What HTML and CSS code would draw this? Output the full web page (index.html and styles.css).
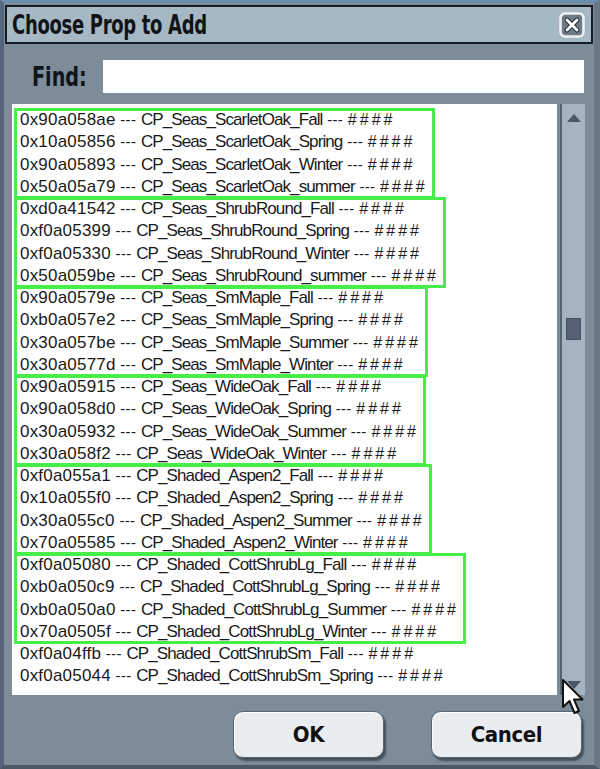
FILE: index.html
```html
<!DOCTYPE html>
<html lang="en">
<head>
    <meta charset="UTF-8">
    <title>Choose Prop to Add</title>
    <link rel="stylesheet" href="styles.css">
</head>
<body>

<div class="window">
    <div class="titlebar">
        <span class="title">Choose Prop to Add</span>
        <svg class="close" width="26" height="26" viewBox="0 0 26 26">
            <rect x="1.5" y="1.5" width="23" height="23" rx="4.5" fill="#6e7c88" stroke="#eef2f4" stroke-width="2.6"/>
            <path d="M8 8 L18 18 M18 8 L8 18" stroke="#2c3640" stroke-width="5.2" stroke-linecap="round"/>
            <path d="M8 8 L18 18 M18 8 L8 18" stroke="#ffffff" stroke-width="2.8" stroke-linecap="round"/>
        </svg>
    </div>

    <div class="find">
        <label class="find-label">Find:</label>
        <input class="find-input" type="text">
    </div>

    <div class="middle">
        <div class="list"><!--props list, green boxes are the groups-->
            <div class="group">
                <div class="row"><span class="hex">0x90a058ae</span> <span class="sep">---</span> <span class="name">CP_Seas_ScarletOak_Fall</span> <span class="sep">---</span> <span class="hash">####</span></div>
                <div class="row"><span class="hex">0x10a05856</span> <span class="sep">---</span> <span class="name">CP_Seas_ScarletOak_Spring</span> <span class="sep">---</span> <span class="hash">####</span></div>
                <div class="row"><span class="hex">0x90a05893</span> <span class="sep">---</span> <span class="name">CP_Seas_ScarletOak_Winter</span> <span class="sep">---</span> <span class="hash">####</span></div>
                <div class="row"><span class="hex">0x50a05a79</span> <span class="sep">---</span> <span class="name">CP_Seas_ScarletOak_summer</span> <span class="sep">---</span> <span class="hash">####</span></div>
            </div>
            <div class="group">
                <div class="row"><span class="hex">0xd0a41542</span> <span class="sep">---</span> <span class="name">CP_Seas_ShrubRound_Fall</span> <span class="sep">---</span> <span class="hash">####</span></div>
                <div class="row"><span class="hex">0xf0a05399</span> <span class="sep">---</span> <span class="name">CP_Seas_ShrubRound_Spring</span> <span class="sep">---</span> <span class="hash">####</span></div>
                <div class="row"><span class="hex">0xf0a05330</span> <span class="sep">---</span> <span class="name">CP_Seas_ShrubRound_Winter</span> <span class="sep">---</span> <span class="hash">####</span></div>
                <div class="row"><span class="hex">0x50a059be</span> <span class="sep">---</span> <span class="name">CP_Seas_ShrubRound_summer</span> <span class="sep">---</span> <span class="hash">####</span></div>
            </div>
            <div class="group">
                <div class="row"><span class="hex">0x90a0579e</span> <span class="sep">---</span> <span class="name">CP_Seas_SmMaple_Fall</span> <span class="sep">---</span> <span class="hash">####</span></div>
                <div class="row"><span class="hex">0xb0a057e2</span> <span class="sep">---</span> <span class="name">CP_Seas_SmMaple_Spring</span> <span class="sep">---</span> <span class="hash">####</span></div>
                <div class="row"><span class="hex">0x30a057be</span> <span class="sep">---</span> <span class="name">CP_Seas_SmMaple_Summer</span> <span class="sep">---</span> <span class="hash">####</span></div>
                <div class="row"><span class="hex">0x30a0577d</span> <span class="sep">---</span> <span class="name">CP_Seas_SmMaple_Winter</span> <span class="sep">---</span> <span class="hash">####</span></div>
            </div>
            <div class="group">
                <div class="row"><span class="hex">0x90a05915</span> <span class="sep">---</span> <span class="name">CP_Seas_WideOak_Fall</span> <span class="sep">---</span> <span class="hash">####</span></div>
                <div class="row"><span class="hex">0x90a058d0</span> <span class="sep">---</span> <span class="name">CP_Seas_WideOak_Spring</span> <span class="sep">---</span> <span class="hash">####</span></div>
                <div class="row"><span class="hex">0x30a05932</span> <span class="sep">---</span> <span class="name">CP_Seas_WideOak_Summer</span> <span class="sep">---</span> <span class="hash">####</span></div>
                <div class="row"><span class="hex">0x30a058f2</span> <span class="sep">---</span> <span class="name">CP_Seas_WideOak_Winter</span> <span class="sep">---</span> <span class="hash">####</span></div>
            </div>
            <div class="group">
                <div class="row"><span class="hex">0xf0a055a1</span> <span class="sep">---</span> <span class="name">CP_Shaded_Aspen2_Fall</span> <span class="sep">---</span> <span class="hash">####</span></div>
                <div class="row"><span class="hex">0x10a055f0</span> <span class="sep">---</span> <span class="name">CP_Shaded_Aspen2_Spring</span> <span class="sep">---</span> <span class="hash">####</span></div>
                <div class="row"><span class="hex">0x30a055c0</span> <span class="sep">---</span> <span class="name">CP_Shaded_Aspen2_Summer</span> <span class="sep">---</span> <span class="hash">####</span></div>
                <div class="row"><span class="hex">0x70a05585</span> <span class="sep">---</span> <span class="name">CP_Shaded_Aspen2_Winter</span> <span class="sep">---</span> <span class="hash">####</span></div>
            </div>
            <div class="group">
                <div class="row"><span class="hex">0xf0a05080</span> <span class="sep">---</span> <span class="name">CP_Shaded_CottShrubLg_Fall</span> <span class="sep">---</span> <span class="hash">####</span></div>
                <div class="row"><span class="hex">0xb0a050c9</span> <span class="sep">---</span> <span class="name">CP_Shaded_CottShrubLg_Spring</span> <span class="sep">---</span> <span class="hash">####</span></div>
                <div class="row"><span class="hex">0xb0a050a0</span> <span class="sep">---</span> <span class="name">CP_Shaded_CottShrubLg_Summer</span> <span class="sep">---</span> <span class="hash">####</span></div>
                <div class="row"><span class="hex">0x70a0505f</span> <span class="sep">---</span> <span class="name">CP_Shaded_CottShrubLg_Winter</span> <span class="sep">---</span> <span class="hash">####</span></div>
            </div>
            <div class="row"><span class="hex">0xf0a04ffb</span> <span class="sep">---</span> <span class="name">CP_Shaded_CottShrubSm_Fall</span> <span class="sep">---</span> <span class="hash">####</span></div>
            <div class="row"><span class="hex">0xf0a05044</span> <span class="sep">---</span> <span class="name">CP_Shaded_CottShrubSm_Spring</span> <span class="sep">---</span> <span class="hash">####</span></div>
        </div>

        <div class="scrollbar">
            <svg class="arrow" width="16" height="10" viewBox="0 0 16 10"><path d="M8 1 L15 9 L1 9 Z" fill="#4a5767"/></svg>
            <div class="thumb"></div>
            <div class="track-rest"></div>
            <svg class="arrow" width="16" height="10" viewBox="0 0 16 10"><path d="M1 1 L15 1 L8 9 Z" fill="#4a5767"/></svg>
        </div>
    </div>

    <div class="buttons">
        <button class="btn">OK</button>
        <button class="btn">Cancel</button>
    </div>

    <svg class="cursor" width="24" height="38" viewBox="0 0 24 38">
        <path d="M2 2 L2 29 L8.5 23 L13.5 35 L18 33 L13 21.5 L21.5 21.5 Z" fill="#ffffff" stroke="#111111" stroke-width="2" stroke-linejoin="round"/>
    </svg>
</div>

</body>
</html>
```

FILE: styles.css
```css
body{
    margin: 0;
    background: #7c8d99;
    font-family: "Liberation Sans", Arial, sans-serif;
}
.window{
    position: relative;
    width: 600px;
    height: 769px;
    box-sizing: border-box;
    overflow: hidden;
    background: #7c8d99;
    border-top: 3px solid #6a8cb0;
    border-left: 4px solid #56667a;
    border-right: 6px solid #687985;
    border-bottom: 4px solid #4b5966;
}

/* title */
.titlebar{
    height: 39px;
    box-sizing: border-box;
    margin: 2px 1px 0 1px;
    border: 2px solid #161c22;
    background: #a7b8c5;
    display: flex;
    align-items: center;
    justify-content: space-between;
    padding: 0 6px 0 5px;
}
.title{
    display: inline-block;
    font-family: "DejaVu Sans Condensed", "Liberation Sans", sans-serif;
    font-weight: bold;
    font-size: 27px;
    letter-spacing: -0.4px;
    color: #101418;
    transform: scaleX(0.74);
    transform-origin: left center;
}
.close{
    display: block;
    margin-top: 1px;
}

/* find */
.find{
    display: flex;
    align-items: center;
    margin-top: 16px;
    padding: 0 10px 0 28px;
    height: 33px;
}
.find-label{
    display: inline-block;
    font-family: "DejaVu Sans Condensed", "Liberation Sans", sans-serif;
    font-weight: bold;
    font-size: 26px;
    color: #101418;
    width: 71px;
    transform: scaleX(0.82);
    transform-origin: left center;
}
.find-input{
    flex: 1;
    height: 33px;
    box-sizing: border-box;
    border: none;
    background: #fcfdfd;
    margin: 0;
    padding: 0 6px;
}

/* list + scrollbar */
.middle{
    display: flex;
    margin-top: 11px;
    height: 591px;
    padding-left: 8px;
}
.list{
    width: 545px;
    background: #ffffff;
    padding: 5px 0 0 3px;
    box-sizing: border-box;
    overflow: hidden;
}
.group{
    width: fit-content;
    padding-right: 6px;
    outline: 3px solid #48ee48;
    outline-offset: -2px;
}
.row{
    height: 22.25px;
    line-height: 22.25px;
    padding-left: 5px;
    font-size: 17px;
    color: #1a1a1a;
    white-space: nowrap;
}
.hex{
    letter-spacing: 0.2px;
}
.sep{
    letter-spacing: 0.3px;
    font-size: 15px;
}
.name{
    letter-spacing: -0.9px;
}
.hash{
    letter-spacing: 3px;
    font-size: 16px;
}

.scrollbar{
    width: 25px;
    margin-left: 3px;
    background: #a4b4c0;
    border-left: 2px solid #56636f;
    box-sizing: border-box;
    display: flex;
    flex-direction: column;
    align-items: center;
}
.arrow{
    display: block;
    margin-top: 9px;
}
.arrow:last-child{
    margin: 0 0 5px;
}
.thumb{
    width: 15px;
    height: 22px;
    margin-top: 195px;
    background: #566274;
    border: 1px solid #46505e;
    box-sizing: border-box;
}
.track-rest{
    flex: 1;
}

/* buttons */
.buttons{
    display: flex;
    justify-content: flex-end;
    gap: 47px;
    margin-top: 16px;
    padding-right: 12px;
}
.btn{
    width: 151px;
    height: 47px;
    background: #e9edf0;
    border: 1px solid #59656f;
    border-radius: 10px;
    box-shadow: 2px 3px 2px rgba(30,38,46,0.6), inset 1px 1px 0 #ffffff;
    font-family: "DejaVu Sans Condensed", "Liberation Sans", sans-serif;
    font-weight: bold;
    font-size: 22px;
    letter-spacing: -0.4px;
    color: #111111;
    padding: 0;
}

.cursor{
    position: absolute;
    left: 557px;
    top: 675px;
}
```
